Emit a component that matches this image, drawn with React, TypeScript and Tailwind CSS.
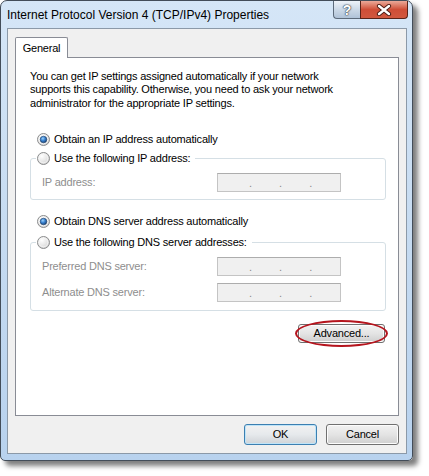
import { JSX } from "react";

const font = "font-['Liberation_Sans',Arial,sans-serif]";

function Radio({ checked }: { checked?: boolean }): JSX.Element {
  return (
    <svg width="13" height="13" viewBox="0 0 13 13" className="shrink-0">
      <defs>
        <radialGradient id="rOuter" cx="35%" cy="30%" r="80%">
          <stop offset="0%" stopColor="#ffffff" />
          <stop offset="60%" stopColor="#e4e4e4" />
          <stop offset="100%" stopColor="#c9c9c9" />
        </radialGradient>
        <radialGradient id="rDot" cx="40%" cy="35%" r="70%">
          <stop offset="0%" stopColor="#9ed3fb" />
          <stop offset="45%" stopColor="#3d86d4" />
          <stop offset="100%" stopColor="#173e70" />
        </radialGradient>
      </defs>
      <circle cx="6.5" cy="6.5" r="6" fill="url(#rOuter)" stroke="#8b8c8d" />
      <circle cx="6.5" cy="6.5" r="4.3" fill="none" stroke="#f6f6f6" strokeWidth="0.8" />
      {checked && <circle cx="6.5" cy="6.5" r="3.3" fill="url(#rDot)" stroke="#1c3f6b" strokeWidth="0.6" />}
    </svg>
  );
}

function IpBox(): JSX.Element {
  return (
    <div className="w-[124px] h-[19px] border border-[#c4c4c4] border-t-[#adadad] bg-[#f0f0f0] flex items-center text-[#8a8a8a] leading-none pt-[3px] tracking-normal">
      <span className="ml-[31px]">.</span>
      <span className="ml-[27px]">.</span>
      <span className="ml-[27px]">.</span>
    </div>
  );
}

function Field({ label }: { label: string }): JSX.Element {
  return (
    <div className="flex items-center pl-[11px]">
      <span className="w-[175px] text-[#8e8e8e]">{label}</span>
      <IpBox />
    </div>
  );
}

function WinButton({ label, primary }: { label: string; primary?: boolean }): JSX.Element {
  return (
    <button
      className={
        primary
          ? "w-[73px] h-[21px] rounded-[3px] border border-[#3c7fb1] bg-linear-to-b from-[#f2f2f2] via-[#e6e9ec] to-[#cfd3d7] shadow-[inset_0_0_0_1px_#bfe4f8] text-black"
          : "w-[73px] h-[21px] rounded-[3px] border border-[#707070] bg-linear-to-b from-[#f2f2f2] via-[#e4e4e4] to-[#cfcfcf] shadow-[inset_0_0_0_1px_#fcfcfc] text-black"
      }
    >
      {label}
    </button>
  );
}

export default function App(): JSX.Element {
  return (
    <div className={`w-[429px] h-[476px] bg-white text-[11px] leading-[13px] tracking-[-0.2px] text-black ${font}`}>
      <div className="w-[413px] h-[461px] flex flex-col border border-[#434d59] rounded-t-[7px] rounded-b-[5px] bg-linear-to-b from-[#d5e6f7] via-[#c6dbf1] to-[#b8d2ee] shadow-[5px_5px_5px_rgba(0,0,0,0.5)] pl-[6px] pr-[5px] pb-[6px]">
        {/* title bar */}
        <div className="h-[27px] flex items-start">
          <div className="pt-[8px] flex-1 text-black text-[12px] tracking-normal">Internet Protocol Version 4 (TCP/IPv4) Properties</div>
          <div className="flex -mr-[1px]">
            <div className="w-[27px] h-[18px] rounded-bl-[4px] border border-t-0 border-r-0 border-[#5d6b7b] bg-linear-to-b from-[#eef3f9] via-[#ccd9e7] to-[#b0c3d8] flex items-center justify-center">
              <span className="text-white font-bold text-[14px] leading-none [text-shadow:0_0_1px_#3b4652,0_0_1px_#3b4652,0_0_2px_#3b4652]">?</span>
            </div>
            <div className="w-[48px] h-[18px] rounded-br-[4px] border border-t-0 border-[#5a2419] bg-linear-to-b from-[#eaa999] via-[#cf4e37] to-[#d1583f] flex items-center justify-center">
              <svg width="16" height="12" viewBox="0 0 16 12">
                <path d="M3 2 L13 10 M13 2 L3 10" stroke="#4a1a12" strokeWidth="4.2" strokeLinecap="round" />
                <path d="M3 2 L13 10 M13 2 L3 10" stroke="#ffffff" strokeWidth="2.4" strokeLinecap="round" />
              </svg>
            </div>
          </div>
        </div>

        {/* client area */}
        <div className="flex-1 flex flex-col border border-[#8b99a8] bg-[#f0f0f0] pt-[8px] px-[7px] pb-[8px]">
          <div className="self-start relative z-10 -mb-[1px] w-[53px] h-[21px] border border-b-0 border-[#898c95] bg-white rounded-t-[2px] flex items-center justify-center">
            General
          </div>
          <div className="h-[359px] border border-[#898c95] bg-white flex flex-col">
            <p className="mt-[12px] ml-[14px] leading-[13.3px]">
              You can get IP settings assigned automatically if your network
              <br />
              supports this capability. Otherwise, you need to ask your network
              <br />
              administrator for the appropriate IP settings.
            </p>

            <div className="mt-[22px] ml-[21px] h-[15px] flex items-center gap-[4px]">
              <Radio checked />
              <span>Obtain an IP address automatically</span>
            </div>

            <fieldset className="mt-[4px] ml-[14px] w-[356px] border border-[#d5dfe5] rounded-[3px] pb-[7px]">
              <legend className="ml-[5px] pl-[1px] pr-[5px] h-[16px] flex items-center gap-[4px]">
                <Radio />
                <span>Use the following IP address:</span>
              </legend>
              <div className="mt-[6px]">
                <Field label="IP address:" />
              </div>
            </fieldset>

            <div className="mt-[14px] ml-[21px] h-[15px] flex items-center gap-[4px]">
              <Radio checked />
              <span>Obtain DNS server address automatically</span>
            </div>

            <fieldset className="mt-[6px] ml-[14px] w-[356px] border border-[#d5dfe5] rounded-[3px] pb-[8px]">
              <legend className="ml-[5px] pl-[1px] pr-[5px] h-[16px] flex items-center gap-[4px]">
                <Radio />
                <span>Use the following DNS server addresses:</span>
              </legend>
              <div className="mt-[6px] flex flex-col gap-[7px]">
                <Field label="Preferred DNS server:" />
                <Field label="Alternate DNS server:" />
              </div>
            </fieldset>

            <div className="mt-[13px] ml-[282px] self-start relative">
              <button className="w-[87px] h-[19px] rounded-[3px] border border-[#707070] bg-linear-to-b from-[#f2f2f2] via-[#e4e4e4] to-[#cfcfcf] shadow-[inset_0_0_0_1px_#fcfcfc] text-black">
                Advanced...
              </button>
              <div className="absolute -left-[3px] -top-[4px] w-[93px] h-[27px] rounded-[50%] border-2 border-[#b5141d] pointer-events-none" />
            </div>
          </div>

          <div className="mt-[8px] flex justify-end gap-[9px]">
            <WinButton label="OK" primary />
            <WinButton label="Cancel" />
          </div>
        </div>
      </div>
    </div>
  );
}
